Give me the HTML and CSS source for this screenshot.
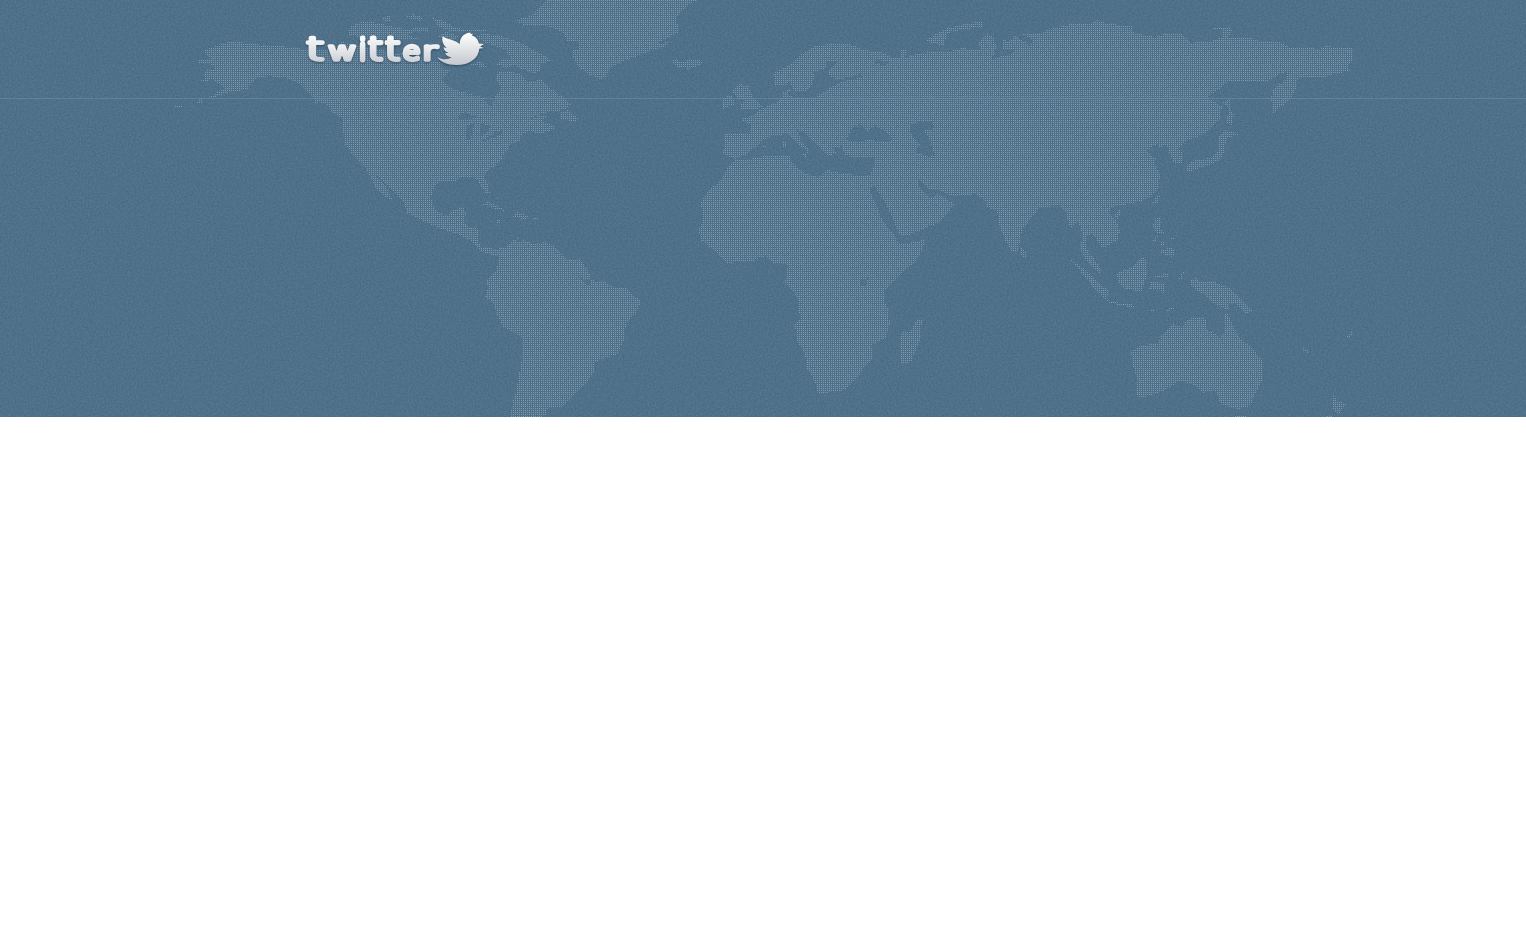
FILE: index.html
```html
<!DOCTYPE html>
<html lang="en">
<head>
<meta charset="utf-8">
<title>Twitter</title>
<link rel="stylesheet" href="styles.css">
</head>
<body>
<div class="hero">
  <svg class="map" width="1526" height="417" viewBox="0 0 1526 417" aria-hidden="true">
    <defs>
      <pattern id="dots" width="2" height="2" patternUnits="userSpaceOnUse"><rect class="dot" x="1" y="0" width="1" height="1"/></pattern>
      <filter id="grain" x="0" y="0" width="100%" height="100%" color-interpolation-filters="sRGB">
        <feTurbulence type="fractalNoise" baseFrequency="0.6" numOctaves="2" seed="4"/>
        <feColorMatrix type="matrix" values="0.1 0 0 0 0.264  0.1 0 0 0 0.392  0.09 0 0 0 0.497  0 0 0 0 1"/>
      </filter>
    </defs>
    <rect width="1526" height="417" filter="url(#grain)"/>
    <g class="land" fill="url(#dots)" fill-rule="evenodd">
      <!-- North and Central America, with the Great Lakes cut out -->
      <path d="M205 50L218 45 232 41 245 43 262 45 280 46 305 49 330 50 342 42 440 62 440 68 452 71 445 75 442 80 447 86 460 91 475 95 483 97 488 105 493 106 494 97 500 92 500 86 496 80 496 74 502 71 512 72 522 75 527 81 535 82 541 78 549 87 560 95 570 104 564 110 548 112 535 116 528 121 538 116 546 116 542 121 556 127 553 130 538 134 530 131 522 135 520 141 510 145 505 153 500 162 490 169 484 175 488 185 490 193 486 194 482 188 478 180 470 177 460 178 455 181 440 181 434 187 431 197 433 205 438 213 447 216 453 209 465 208 466 214 463 222 467 226 479 229 478 240 482 248 490 248 499 250 497 256 487 254 477 248 470 240 462 236 450 232 437 227 425 222 407 213 404 203 397 195 388 185 376 175 385 185 393 201 386 197 378 190 373 183 368 172 363 164 353 155 345 144 343 130 342 118 332 112 329 106 320 102 316 104 312 96 302 85 290 79 270 76 258 78 250 84 248 90 232 91 220 95 212 99 211 96 225 88 219 84 213 80 205 81 205 74 206 70 216 68 210 64 199 64 199 60 212 60 205 53Z
        M455 118L466 112 477 117 468 120ZM466 126L475 123 470 140 466 140ZM480 124L490 125 488 132 480 136ZM482 141L496 132 504 129 501 134 486 141Z"/>
      <path d="M175 105h8v2h-8ZM195 104L202 98V103ZM201 80h3v2h-3ZM560 113L567 110 578 118 576 121 560 120Z"/>
      <path d="M347 34L351 26 365 21 377 23 395 27 415 31 407 35 420 39 375 42ZM379 20L391 15V21ZM405 17L414 14 424 18 420 21ZM412 27H428V31H412ZM432 18L445 21 454 27 463 29 487 29 486 32 455 32 440 28ZM437 36L446 32 458 36 453 42ZM474 35L487 34 500 36 520 42 532 49 545 56 552 60 540 65 542 70 535 73 525 70 515 66 505 67 497 65 500 60 512 60 506 50 497 47 485 43ZM468 65L482 61 488 68Z"/>
      <!-- Greenland and Iceland -->
      <path d="M548 0L538 8 530 16 515 20 525 26 545 25 553 28 563 32 567 41 577 41 580 48 572 51 574 60 580 68 590 75 600 79 605 78 610 68 625 60 640 55 652 50 667 46 668 42 656 44 672 36 678 33 677 15 690 4 698 0ZM672 58L682 62 691 59 703 61 698 66 688 69 674 66Z"/>
      <!-- Caribbean -->
      <path d="M477 204L490 202 500 207 506 211 497 210 488 205ZM511 216L518 212 528 216 527 219 513 218ZM533 217H538V220H533ZM497 220H501V223H497ZM494 196L499 198 497 200Z"/>
      <!-- South America -->
      <path d="M497 252L499 248 505 248 513 240 518 238 516 243 524 240 532 243 540 244 545 241 553 246 560 252 567 260 580 260 588 270 592 280 605 282 615 288 625 288 632 295 640 299 640 305 635 314 626 323 624 340 618 354 608 357 595 362 594 373 588 380 580 390 572 396 567 401 561 407 548 408 546 416 538 417 511 417 512 403 516 392 518 380 522 360 522 338 510 330 504 328 497 315 494 303 485 297 488 288 486 280 495 272 499 262ZM581 278L592 281 589 287Z"/>
      <!-- Eurasia and Africa, with the inland seas cut out -->
      <path d="M735 160L727 168 722 180 708 190 701 203 703 220 699 228 700 240 710 247 720 257 728 265 735 261 753 261 766 256 775 264 783 263 788 265 785 282 798 298 799 312 801 318 795 325 797 340 805 355 807 368 815 382 818 393 826 393 845 390 857 379 865 365 873 357 871 345 885 338 890 325 889 312 884 300 884 292 895 280 905 270 915 262 923 250 924 240 912 242 905 244 899 243 894 235 884 222 875 203 869 187 874 186 884 200 892 217 900 235 910 235 925 228 940 222 948 213 954 204 945 198 938 194 930 199 920 189 917 181 921 180 928 189 940 190 950 195 963 196 975 194 984 199 988 208 997 210 999 225 1005 240 1012 252 1018 252 1022 230 1032 217 1040 207 1060 206 1066 213 1070 228 1078 222 1082 232 1081 250 1085 258 1093 268 1101 274 1100 268 1095 260 1086 248 1087 235 1092 234 1097 240 1102 248 1110 245 1119 238 1120 230 1117 222 1108 213 1112 207 1125 205 1145 200 1158 190 1160 175 1154 163 1157 158 1150 155 1147 150 1158 144 1160 148 1167 145 1170 155 1175 163 1182 164 1183 155 1179 148 1188 140 1200 136 1210 130 1220 118 1222 106 1212 100 1207 97 1218 90 1225 83 1232 81 1267 82 1280 74 1286 72 1288 78 1274 88 1271 98 1273 113 1282 106 1291 98 1296 88 1298 78 1320 78 1335 74 1350 71 1348 65 1352 60 1352 48 1335 47 1325 46 1318 50 1310 47 1290 47 1280 42 1262 42 1250 38 1228 37 1233 30 1228 27 1208 28 1222 30 1222 37 1210 41 1190 43 1182 34 1165 34 1155 37 1140 34 1132 32 1133 26 1110 24 1097 20 1090 24 1070 24 1050 29 1040 34 1022 34 1034 41 1030 45 1015 36 1010 42 1002 38 1003 50 1016 50 1010 55 998 57 992 59 996 48 995 38 988 34 978 42 982 50 962 48 950 51 930 52 915 54 905 58 907 50 900 50 902 56 893 58 882 52 865 50 850 44 838 43 815 46 802 54 790 65 773 73 775 86 784 86 790 82 795 92 805 92 812 84 815 76 813 72 825 68 828 61 836 62 828 70 830 77 840 80 860 74 864 77 845 81 833 86 824 92 815 97 795 98 788 94 789 90 783 91 782 97 775 103 763 108 753 115 740 119 750 124 751 133 725 134 723 154 735 159 745 155 755 147 762 140 775 135 788 134 798 145 806 149 807 153 800 153 806 157 810 149 802 142 797 130 805 133 815 143 823 152 828 157 836 153 832 148 842 146 845 155 855 158 874 158 874 167 870 175 860 175 845 174 828 170 818 177 805 173 792 163 790 155 765 156 745 160Z
        M847 138L853 127 860 124 867 131 875 126 886 131 893 140 885 142 870 140 850 142ZM910 125L920 121 932 122 935 128 924 130 930 140 935 155 930 157 915 152 920 145 912 135ZM860 281L868 278 866 286 861 286ZM873 62L879 59 889 63 884 66Z"/>
      <path d="M731 92L740 84 748 86 752 95 762 107 755 110 742 110 739 105 745 101 737 98ZM723 98L731 95 736 104 723 109ZM783 141H786V147H783ZM763 146H766V148H763ZM783 91L790 90 788 98 783 98Z"/>
      <path d="M926 40L945 29 965 24 983 21 983 27 965 29 948 33 944 45 933 44ZM901 333L910 331 917 320 922 320 920 340 911 362 901 364ZM1020 247L1026 251 1026 258 1020 256Z"/>
      <!-- East Asian islands -->
      <path d="M1222 101L1231 100 1231 112 1234 114 1232 125 1227 124 1228 108ZM1225 130L1240 134 1226 139 1225 148 1222 158 1210 165 1193 170 1188 173 1185 167 1195 160 1210 158 1219 150 1219 137ZM1153 203L1156 196 1160 196 1157 205ZM1114 214L1120 208 1121 213 1117 220ZM1152 226L1158 216 1162 222 1160 230 1166 232 1158 234ZM1153 241L1159 233 1156 241ZM1159 243L1166 241 1163 246ZM1168 239L1175 237 1173 241ZM1159 251L1172 247 1175 253 1173 257 1167 256Z"/>
      <path d="M1117 273L1130 268 1143 256 1147 263 1146 278 1142 291 1125 290 1118 282ZM1071 260L1082 267 1095 280 1108 290 1107 300 1120 303 1136 305 1134 308 1110 303 1098 292 1085 277ZM1151 282L1165 283 1164 295 1158 289 1149 290ZM1155 276L1170 273 1168 277 1155 278ZM1179 280L1180 275 1184 272 1181 280ZM1165 312L1170 307 1176 307 1168 312ZM1151 310H1154V312H1151ZM1189 281L1195 278 1200 282 1215 282 1230 288 1240 297 1252 311 1246 313 1235 304 1228 304 1228 310 1213 303 1205 294 1195 290Z"/>
      <!-- Australia and Oceania -->
      <path d="M1131 352L1140 346 1158 343 1162 335 1172 324 1182 327 1188 319 1200 317 1207 319 1206 329 1220 337 1225 332 1225 313 1228 313 1233 325 1240 338 1252 348 1262 360 1262 380 1255 395 1250 406 1238 409 1221 404 1215 390 1203 393 1195 385 1180 381 1165 390 1145 397 1138 398 1136 388 1138 380 1133 365ZM1333 394L1337 401 1346 404 1338 415 1332 408ZM1325 417L1333 414 1332 417ZM1235 415H1248L1246 417H1235ZM1302 348L1308 350 1308 353 1304 352ZM1346 338L1352 330 1352 336Z"/>
    </g>
  </svg>
  <header class="bar">
    <a class="logo" href="#" aria-label="Twitter">
      <svg class="brand" width="184" height="40" viewBox="303 30 184 40">
        <defs>
          <linearGradient id="silver" gradientUnits="userSpaceOnUse" x1="0" y1="33" x2="0" y2="65"><stop offset="0" stop-color="#fff"/><stop offset="1" stop-color="#c3c8cf"/></linearGradient>
          <linearGradient id="letters" gradientUnits="userSpaceOnUse" x1="0" y1="-22" x2="0" y2="3"><stop offset="0" stop-color="#fff"/><stop offset="1" stop-color="#c9cdd3"/></linearGradient>
        </defs>
        <g class="word" fill="url(#letters)" stroke="url(#letters)">
          <text transform="translate(306 60) scale(1.85 1.25)">t</text>
          <text transform="translate(328 60) scale(1.42 1)">w</text>
          <text transform="translate(359.2 60) scale(1 1.12)">i</text>
          <text transform="translate(368 60) scale(1.5 1.25)">t</text>
          <text transform="translate(385.3 60) scale(1.5 1.25)">t</text>
          <text transform="translate(402.8 60) scale(1.14 1)">e</text>
          <text transform="translate(422.3 60) scale(1.45 1)">r</text>
        </g>
        <path fill="url(#silver)" d="M442.7 36.3C447 39.5 454 39.5 459.8 44C459.8 38 463 33.8 469 32.7L471.2 32.7 469.8 34 473 33.8 471.7 35.4C476 36.5 478 39.5 479 43.5L484 44 480.2 46.4 483.5 48 479.3 48.7C478.5 58.5 469.5 65 456.5 65C447 65 440 61.5 437.5 57C442 60 448 60 451.5 57.3C447.8 57 445.8 55 445.3 53.1L448.7 53C445.5 51.8 443.6 49.7 443.5 47.2L446.7 48C443.2 45 441.3 40.5 442.7 36.3Z"/>
      </svg>
    </a>
  </header>
</div>
</body>
</html>
```
FILE: styles.css
```css
body {
  margin: 0;
  background: #fff;
}

.hero {
  position: relative;
  height: 417px;
  overflow: hidden;
  background: #4e708a;
}

.map {
  position: absolute;
  inset: 0;
}

.land {
  shape-rendering: crispEdges;
}

.dot {
  fill: #7d99ad;
}

.bar {
  position: relative;
  box-sizing: border-box;
  height: 99px;
  padding: 30px 303px 0;
  border-bottom: 1px solid rgba(107, 148, 176, 0.5);
}

.logo {
  display: inline-block;
}

.brand {
  display: block;
  filter: drop-shadow(0 1px 1px rgba(25, 50, 70, 0.6));
}

.word {
  font: 200 25px "DejaVu Sans Light", "DejaVu Sans", sans-serif;
  stroke-width: 4.6px;
  stroke-linejoin: round;
}

.word text {
  vector-effect: non-scaling-stroke;
}
```
